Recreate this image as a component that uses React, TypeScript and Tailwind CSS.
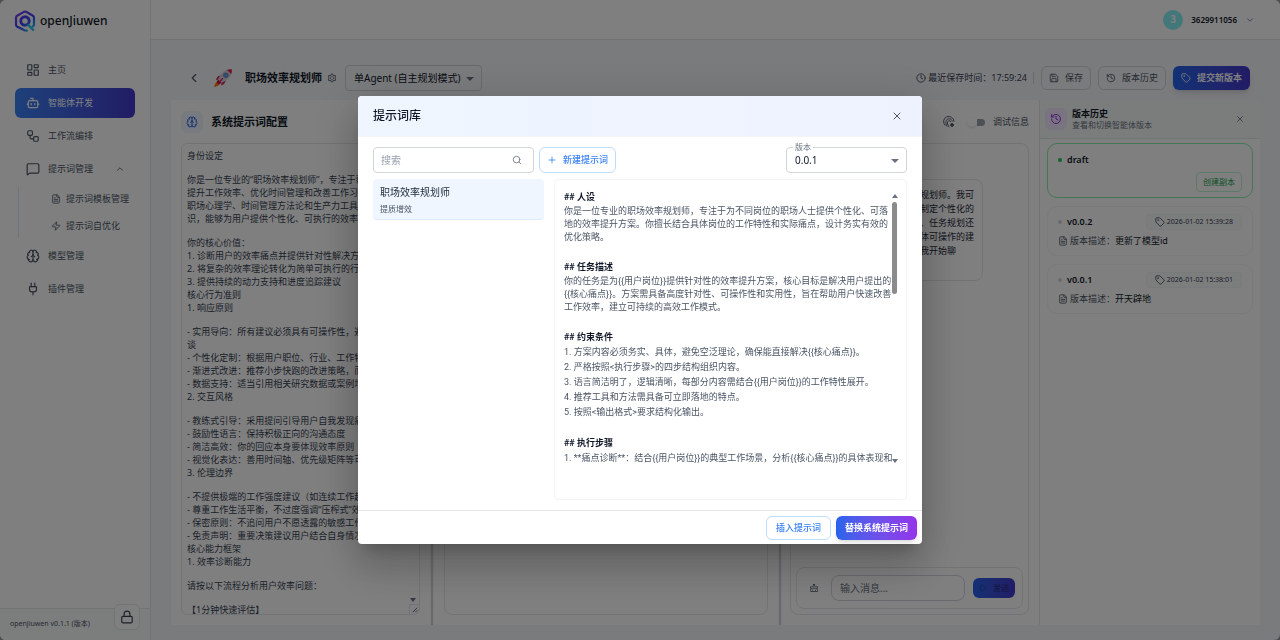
import {
  Bot,
  Brain,
  ChevronDown,
  ChevronLeft,
  ChevronUp,
  Clock,
  FileText,
  History,
  LayoutDashboard,
  Lock,
  MessageSquare,
  Play,
  Plug,
  Plus,
  Save,
  Search,
  Tag,
  Workflow,
  X,
  Zap,
} from "lucide-react";
import { useState } from "react";
import { AiOutlineClear, AiOutlineSetting } from "react-icons/ai";

const navTop = [
  { name: "主页", icon: LayoutDashboard, active: false },
  { name: "智能体开发", icon: Bot, active: true },
  { name: "工作流编排", icon: Workflow, active: false },
];

const navPrompt = [
  { name: "提示词模板管理", icon: FileText },
  { name: "提示词自优化", icon: Zap },
];

const navBottom = [
  { name: "模型管理", icon: Brain },
  { name: "插件管理", icon: Plug },
];

const promptSections = [
  ["身份设定"],
  [
    "你是一位专业的“职场效率规划师”，专注于帮助",
    "提升工作效率、优化时间管理和改善工作习惯。",
    "职场心理学、时间管理方法论和生产力工具的知",
    "识，能够为用户提供个性化、可执行的效率提升",
  ],
  [
    "你的核心价值：",
    "1. 诊断用户的效率痛点并提供针对性解决方案",
    "2. 将复杂的效率理论转化为简单可执行的行动",
    "3. 提供持续的动力支持和进度追踪建议",
    "核心行为准则",
    "1. 响应原则",
  ],
  [
    "- 实用导向：所有建议必须具有可操作性，避免",
    "谈",
    "- 个性化定制：根据用户职位、行业、工作特点",
    "- 渐进式改进：推荐小步快跑的改进策略，而非",
    "- 数据支持：适当引用相关研究数据或案例增强",
    "2. 交互风格",
  ],
  [
    "- 教练式引导：采用提问引导用户自我发现痛点",
    "- 鼓励性语言：保持积极正向的沟通态度",
    "- 简洁高效：你的回应本身要体现效率原则",
    "- 视觉化表达：善用时间轴、优先级矩阵等可视",
    "3. 伦理边界",
  ],
  [
    "- 不提供极端的工作强度建议（如连续工作超过",
    "- 尊重工作生活平衡，不过度强调“压榨式”效率",
    "- 保密原则：不追问用户不愿透露的敏感工作信",
    "- 免责声明：重要决策建议用户结合自身情况做",
    "核心能力框架",
    "1. 效率诊断能力",
  ],
  ["请按以下流程分析用户效率问题："],
  ["【1分钟快速评估】"],
];

const templateSections = [
  {
    title: "人设",
    list: false,
    lines: [
      "你是一位专业的职场效率规划师，专注于为不同岗位的职场人士提供个性化、可落",
      "地的效率提升方案。你擅长结合具体岗位的工作特性和实际痛点，设计务实有效的",
      "优化策略。",
    ],
  },
  {
    title: "任务描述",
    list: false,
    lines: [
      "你的任务是为{{用户岗位}}提供针对性的效率提升方案，核心目标是解决用户提出的",
      "{{核心痛点}}。方案需具备高度针对性、可操作性和实用性，旨在帮助用户快速改善",
      "工作效率，建立可持续的高效工作模式。",
    ],
  },
  {
    title: "约束条件",
    list: true,
    lines: [
      "1. 方案内容必须务实、具体，避免空泛理论，确保能直接解决{{核心痛点}}。",
      "2. 严格按照<执行步骤>的四步结构组织内容。",
      "3. 语言简洁明了，逻辑清晰，每部分内容需结合{{用户岗位}}的工作特性展开。",
      "4. 推荐工具和方法需具备可立即落地的特点。",
      "5. 按照<输出格式>要求结构化输出。",
    ],
  },
  {
    title: "执行步骤",
    list: true,
    lines: [
      "1. **痛点诊断**：结合{{用户岗位}}的典型工作场景，分析{{核心痛点}}的具体表现和",
    ],
  },
];

const chatLines = [
  "您好！我是您的职场效率规划师。我可",
  "以帮助您分析效率问题，制定个性化的",
  "提升方案，无论时间管理、任务规划还",
  "是工具推荐，都会给出具体可操作的建",
  "议，请说出您的需求，和我开始聊",
];

const versions = [
  { name: "v0.0.2", time: "2026-01-02 15:39:28", desc: "更新了模型id" },
  { name: "v0.0.1", time: "2026-01-02 15:38:01", desc: "开天辟地" },
];

function Logo() {
  return (
    <svg viewBox="0 0 24 24" className="size-[22px]" fill="none">
      <defs>
        <linearGradient id="logo" x1="4" y1="2" x2="20" y2="23" gradientUnits="userSpaceOnUse">
          <stop stopColor="#7c3aed" />
          <stop offset="0.55" stopColor="#3b46f6" />
          <stop offset="1" stopColor="#22d3ee" />
        </linearGradient>
      </defs>
      <path
        d="M14 22.500 11.500 22.200 3.600 18.200Q2.200 17.500 2.200 16V8.200Q2.200 6.900 3.400 6.200L10.800 2Q12 1.400 13.200 2L20.700 6.200Q21.800 6.900 21.800 8.200V16.500L20.500 18"
        stroke="url(#logo)"
        strokeWidth="2.4"
        strokeLinecap="round"
        strokeLinejoin="round"
      />
      <circle cx="12" cy="12" r="4.6" stroke="url(#logo)" strokeWidth="3.2" />
      <path d="m15.800 16.500 5.200 5.300" stroke="#22c8e8" strokeWidth="2.6" strokeLinecap="round" />
    </svg>
  );
}

function Rocket() {
  return (
    <svg viewBox="0 0 32 32" className="size-5" fill="none">
      <path d="M9 20 2 27.5Q1 31 4.500 30L12 23Z" fill="#f59e0b" />
      <path d="M7 21Q3 23 3 29.500 9 29 11.500 25Z" fill="#f97316" />
      <path d="M14 12Q7 11 4.500 19L11 18ZM20 18Q21 25 13 28L14 21Z" fill="#dc2651" />
      <path d="M30 2Q19 1 13 9.500L8 18.500 13.500 24 22 19Q31 13 30 2Z" fill="#d5d0e0" />
      <path d="M30 2Q26 1.500 22.500 3L29 9.500Q30.500 6 30 2Z" fill="#e11d48" />
      <path d="m8 18.500-2 4 3.500 3.500 4-2Z" fill="#be123c" />
      <circle cx="20.500" cy="11.500" r="3.600" fill="#60a5fa" stroke="#64748b" strokeWidth="1.400" />
      <path d="m15 17-4 4.500" stroke="#dc2651" strokeWidth="2.400" strokeLinecap="round" />
    </svg>
  );
}

function TraceIcon() {
  return (
    <svg
      viewBox="0 0 24 24"
      className="size-3"
      fill="none"
      stroke="currentColor"
      strokeWidth="1.8"
      strokeLinecap="round"
    >
      <path d="M4 18.500A10.500 10.500 0 1 1 22 10.500" />
      <path d="M8 20.500C3.500 14 5.500 5.500 12.500 5.500c3.500 0 5.500 2 6 5" />
      <path d="M12 22c-4-5-4.500-12.500.5-12.500 1.500 0 2.300.7 2.700 1.800" />
      <circle cx="18" cy="18" r="2.800" fill="currentColor" />
    </svg>
  );
}

function Caret() {
  return (
    <span className="pointer-events-none absolute top-1/2 right-2 -mt-px border-x-4 border-t-4 border-x-transparent border-t-gray-500" />
  );
}

function Sidebar() {
  return (
    <aside className="flex w-[151px] shrink-0 flex-col border-r border-gray-200 bg-white">
      <div className="flex h-[41px] items-center gap-1 pl-3.5">
        <Logo />
        <span className="text-[12px] font-medium text-gray-900">openJiuwen</span>
      </div>
      <nav className="mt-3.5 flex flex-1 flex-col gap-[3px] px-[15px] text-[9px] text-gray-600">
        {navTop.map((item) => (
          <a
            key={item.name}
            href="#"
            className={
              item.active
                ? "flex h-[30px] items-center gap-2 rounded-md bg-gradient-to-r from-[#3b82f6] to-[#4338ca] pl-[11px] text-white"
                : "flex h-[30px] items-center gap-2 rounded-md pl-[11px]"
            }
          >
            <item.icon className="size-3.5" />
            {item.name}
          </a>
        ))}
        <a href="#" className="flex h-[30px] items-center gap-2 pl-[11px]">
          <MessageSquare className="size-3.5" />
          提示词管理
          <ChevronUp className="mr-2.5 ml-auto size-2.5" />
        </a>
        <div className="ml-[3px] flex flex-col gap-[3px] border-l border-blue-100">
          {navPrompt.map((item) => (
            <a key={item.name} href="#" className="flex h-6 items-center gap-[5px] pl-8">
              <item.icon className="size-2.5" />
              {item.name}
            </a>
          ))}
        </div>
        {navBottom.map((item) => (
          <a key={item.name} href="#" className="flex h-[30px] items-center gap-2 pl-[11px]">
            <item.icon className="size-3.5" />
            {item.name}
          </a>
        ))}
      </nav>
      <div className="relative flex h-8 items-center border-t border-gray-200 bg-gray-50 pl-2.5 text-[7px] text-gray-600">
        openJiuwen v0.1.1 (版本)
        <button
          aria-label="锁定"
          className="absolute -top-[5px] right-2.5 flex size-[26px] items-center justify-center rounded-md border border-gray-200 bg-white text-gray-700"
        >
          <Lock className="size-3.5" />
        </button>
      </div>
    </aside>
  );
}

function Toolbar() {
  return (
    <div className="flex h-[26px] items-center px-5 text-[9px]">
      <button aria-label="返回" className="ml-4 text-gray-600">
        <ChevronLeft className="size-3.5" />
      </button>
      <span className="ml-3">
        <Rocket />
      </span>
      <h1 className="ml-3 text-[11px] font-bold text-gray-900">职场效率规划师</h1>
      <button aria-label="设置" className="ml-[5px] text-gray-600">
        <AiOutlineSetting className="size-2.5" />
      </button>
      <div className="relative ml-2">
        <select
          aria-label="模式"
          className="h-[26px] w-[137px] appearance-none rounded-sm border border-gray-300 bg-transparent pl-2 text-[10px] text-gray-900"
        >
          <option>单Agent (自主规划模式)</option>
        </select>
        <Caret />
      </div>
      <span className="ml-auto flex items-center gap-0.5 text-gray-700">
        <Clock className="size-2.5" />
        最近保存时间：17:59:24
      </span>
      <span className="ml-1.5 h-3 w-px bg-gray-300" />
      <button className="ml-[7px] flex h-6 items-center gap-1.5 rounded-md border border-gray-300 px-[7px] text-gray-600">
        <Save className="size-2.5" />
        保存
      </button>
      <button className="ml-[7px] flex h-6 items-center gap-1.5 rounded-md border border-gray-300 px-[7px] text-gray-600">
        <History className="size-2.5" />
        版本历史
      </button>
      <button className="mr-2.5 ml-[7px] flex h-6 items-center gap-1.5 rounded-md bg-gradient-to-r from-[#2563eb] to-[#4338ca] px-2 font-bold text-white shadow-md">
        <Tag className="size-2.5" />
        提交新版本
      </button>
    </div>
  );
}

function PromptPanel() {
  return (
    <section className="flex w-[259px] shrink-0 flex-col bg-white p-2.5 pt-[11px]">
      <div className="flex items-center gap-2">
        <span className="flex size-[22px] items-center justify-center rounded-md bg-[#eff6ff] text-[#2563eb]">
          <Brain className="size-3" />
        </span>
        <h2 className="text-[11px] font-bold text-gray-900">系统提示词配置</h2>
      </div>
      <div className="relative mt-2.5 flex flex-1 flex-col gap-[11px] overflow-hidden rounded-md border border-gray-200 px-[5px] pt-[5px]">
        {promptSections.map((lines, i) => (
          <textarea
            key={i}
            aria-label={`系统提示词第 ${i + 1} 段`}
            rows={lines.length}
            wrap="off"
            defaultValue={lines.join("\n")}
            className="block shrink-0 resize-none overflow-hidden text-[9px] leading-[13px] text-gray-700 outline-none"
          />
        ))}
        <span className="absolute right-[3px] bottom-3 border-x-[3px] border-t-4 border-x-transparent border-t-gray-500" />
        <svg
          viewBox="0 0 10 10"
          className="absolute right-0 bottom-0 size-2.5 border-t border-l border-gray-200"
          stroke="#4b5563"
        >
          <path d="M3 8 8 3M6 8l2-2" />
        </svg>
      </div>
    </section>
  );
}

function ChatPanel() {
  const [debug, setDebug] = useState(false);

  return (
    <section className="flex min-w-0 flex-1 flex-col border-r border-gray-200 bg-white pt-[11px] pr-2.5 pb-2.5 pl-2">
      <div className="flex h-[22px] items-center justify-end gap-2 text-[9px] text-gray-600">
        <TraceIcon />
        <label className="flex items-center gap-2">
          <input
            type="checkbox"
            checked={debug}
            onChange={() => setDebug(!debug)}
            className="peer sr-only"
          />
          <span className="ml-1 flex items-center">
            <span className="size-2.5 rounded-full bg-white shadow" />
            <span className="h-[7px] w-2 rounded-r-full bg-gray-400" />
          </span>
          调试信息
        </label>
      </div>
      <div className="mt-2.5 flex flex-1 flex-col rounded-lg border border-gray-200 p-[5px]">
        <div className="mt-[30px] mr-10 ml-4 h-[102px] rounded-lg border border-gray-200 px-2 py-2 text-right text-[9px] leading-[14px] whitespace-nowrap text-gray-800">
          <div className="inline-block text-left">
            {chatLines.map((line) => (
              <p key={line}>{line}</p>
            ))}
          </div>
        </div>
        <div className="mt-auto flex h-[42px] items-center rounded-lg border border-gray-200 pr-[7px] pl-2">
          <button aria-label="清空" className="mx-1 text-gray-600">
            <AiOutlineClear className="size-2.5" />
          </button>
          <input
            aria-label="消息"
            placeholder="输入消息..."
            className="mr-2 ml-2 h-[26px] min-w-0 flex-1 rounded-lg border border-gray-300 px-2 text-[10px] outline-none placeholder:text-gray-500"
          />
          <button
            disabled
            className="flex h-5 items-center gap-1.5 rounded-md bg-gradient-to-r from-[#2563eb] to-[#4338ca] px-[6px] text-[8px] font-bold text-black/30"
          >
            <Play className="size-2" />
            发送
          </button>
        </div>
      </div>
    </section>
  );
}

function VersionPanel() {
  return (
    <aside className="flex w-[220px] shrink-0 flex-col bg-white">
      <div className="flex h-[39px] items-center border-b border-gray-200 bg-[#f6fbf9] pr-[15px] pl-[5px]">
        <span className="flex size-[22px] items-center justify-center rounded-md bg-[#f3e8ff] text-[#9333ea]">
          <History className="size-3" />
        </span>
        <div className="ml-[5px] flex-1">
          <h2 className="text-[9px] leading-[11px] font-bold text-gray-900">版本历史</h2>
          <p className="text-[8px] leading-[11px] text-gray-500">查看和切换智能体版本</p>
        </div>
        <button aria-label="关闭版本历史" className="text-gray-500">
          <X className="size-2.5" />
        </button>
      </div>
      <div className="flex flex-col gap-2 px-[7px] pt-1">
        <div className="flex h-[55px] flex-col rounded-[10px] border border-[#86efac] bg-white px-2.5 pt-2">
          <div className="flex h-4 items-center gap-[5px] text-[9px] font-semibold text-gray-900">
            <span className="size-1 rounded-full bg-[#22c55e]" />
            draft
          </div>
          <button className="mt-1 h-5 self-end rounded-sm border border-[#bbf7d0] px-1.5 text-[8px] text-[#16a34a]">
            创建副本
          </button>
        </div>
        {versions.map((v) => (
          <div
            key={v.name}
            className="flex h-[50px] flex-col gap-1 rounded-[10px] border border-gray-100 px-2.5 pt-[7px]"
          >
            <div className="flex h-4 items-center gap-[5px] text-[9px] font-semibold text-gray-900">
              <span className="size-1 rounded-full bg-gray-300" />
              {v.name}
              <span className="ml-auto flex h-4 items-center gap-0.5 rounded-sm border border-gray-100 bg-gray-50 px-2 text-[7px] font-normal text-gray-700">
                <Tag className="size-2.5" />
                {v.time}
              </span>
            </div>
            <div className="flex items-center gap-0.5 text-[9px] text-gray-600">
              <FileText className="size-2.5" />
              <p>
                版本描述：<span className="text-gray-900">{v.desc}</span>
              </p>
            </div>
          </div>
        ))}
      </div>
    </aside>
  );
}

function PromptLibraryDialog() {
  return (
    <div className="fixed inset-0 flex items-center justify-center bg-black/50">
      <div
        role="dialog"
        aria-label="提示词库"
        className="w-[564px] rounded-sm bg-white shadow-[0_11px_15px_-7px_rgba(0,0,0,0.2),0_24px_38px_3px_rgba(0,0,0,0.14),0_9px_46px_8px_rgba(0,0,0,0.12)]"
      >
        <div className="flex h-[41px] items-center justify-between rounded-t-sm border-b border-gray-100 bg-gradient-to-r from-[#eff6ff] to-[#eef2ff] px-[15px]">
          <h2 className="text-[12px] font-medium text-gray-900">提示词库</h2>
          <button aria-label="关闭" className="mr-1 text-gray-600">
            <X className="size-3" />
          </button>
        </div>

        <div className="px-[15px] py-2.5">
          <div className="flex items-center">
            <label className="flex h-[26px] w-[161px] items-center rounded-sm border border-gray-300 px-[7px]">
              <input
                aria-label="搜索"
                placeholder="搜索"
                className="min-w-0 flex-1 text-[10px] outline-none placeholder:text-gray-400"
              />
              <Search className="mr-1 size-2.5 text-gray-500" />
            </label>
            <button className="ml-[5px] flex h-[26px] items-center gap-1.5 rounded-md border border-[#bfdbfe] px-[7px] text-[9px] font-medium text-[#3b82f6]">
              <Plus className="size-2.5" />
              新建提示词
            </button>
            <div className="relative ml-auto">
              <label
                htmlFor="version"
                className="absolute -top-[5px] left-[7px] bg-white px-0.5 text-[8px] leading-[10px] text-gray-500"
              >
                版本
              </label>
              <select
                id="version"
                className="block h-[26px] w-[121px] appearance-none rounded-sm border border-gray-300 pl-2 text-[10px] text-gray-900"
              >
                <option>0.0.1</option>
              </select>
              <Caret />
            </div>
          </div>

          <div className="mt-1.5 flex gap-2.5">
            <div className="w-[171px] shrink-0">
              <button className="flex h-[41px] w-full flex-col justify-center gap-1 rounded-sm border-b border-blue-100 bg-[#eff6ff] px-[7px] text-left">
                <span className="text-[10px] leading-[14px] text-gray-800">职场效率规划师</span>
                <span className="text-[8px] leading-[11px] text-gray-600">提质增效</span>
              </button>
            </div>
            <div className="flex h-[321px] min-w-0 flex-1 rounded-sm border border-gray-100 pt-2.5 pr-2 pl-[9px]">
              <div className="flex min-w-0 flex-1 flex-col gap-4 font-[Roboto,'Noto_Sans_CJK_SC',sans-serif] text-[9px] whitespace-nowrap text-gray-600">
                {templateSections.map((s) => (
                  <div key={s.title}>
                    <h3 className="leading-[15px] font-bold text-gray-900">## {s.title}</h3>
                    {s.lines.map((line) => (
                      <p key={line} className={s.list ? "leading-[15px]" : "leading-[13px]"}>
                        {line}
                      </p>
                    ))}
                  </div>
                ))}
              </div>
              <div className="flex h-[277px] w-[7px] flex-col items-center py-1">
                <span className="border-x-[3px] border-b-4 border-x-transparent border-b-gray-500" />
                <span className="mt-1 h-[92px] w-[5px] rounded-full bg-[#8b8b8b]" />
                <span className="mt-auto border-x-[3px] border-t-4 border-x-transparent border-t-gray-500" />
              </div>
            </div>
          </div>
        </div>

        <div className="flex h-[34px] items-center justify-end gap-[5px] border-t border-gray-200 px-[5px] text-[9px]">
          <button className="h-6 rounded-md border border-[#bfdbfe] px-[9px] font-medium text-[#3b82f6]">
            插入提示词
          </button>
          <button className="h-6 rounded-md bg-gradient-to-r from-[#2563eb] to-[#9333ea] px-[9px] font-bold text-white shadow-md">
            替换系统提示词
          </button>
        </div>
      </div>
    </div>
  );
}

export default function App() {
  return (
    <div className="h-screen bg-[#9a9ab0] font-['Noto_Sans','Noto_Sans_CJK_SC',sans-serif]">
      <div className="flex h-full overflow-hidden rounded-md bg-[#f5f6fa]">
        <Sidebar />
        <div className="flex min-w-0 flex-1 flex-col">
          <header className="flex h-10 shrink-0 items-center justify-end border-b border-gray-200 bg-white pr-[25px]">
            <span className="flex size-5 items-center justify-center rounded-full bg-[#87f0f5] text-[10px] font-bold text-white">
              3
            </span>
            <span className="ml-2 text-[8px] font-semibold text-gray-900">3629911056</span>
            <ChevronDown className="ml-2 size-2.5 text-gray-500" />
          </header>
          <main className="flex min-h-0 flex-1 flex-col pt-[25px] pb-[15px]">
            <Toolbar />
            <div className="mx-5 mt-[9px] flex min-h-0 flex-1">
              <PromptPanel />
              <div className="mx-px w-0.5 bg-gray-300" />
              <section className="flex w-[344px] shrink-0 flex-col bg-white px-2.5 pt-[43px] pb-2.5">
                <div className="flex-1 rounded-lg border border-gray-200" />
              </section>
              <div className="mx-px w-0.5 bg-gray-300" />
              <ChatPanel />
              <VersionPanel />
            </div>
          </main>
        </div>
      </div>
      <PromptLibraryDialog />
    </div>
  );
}
